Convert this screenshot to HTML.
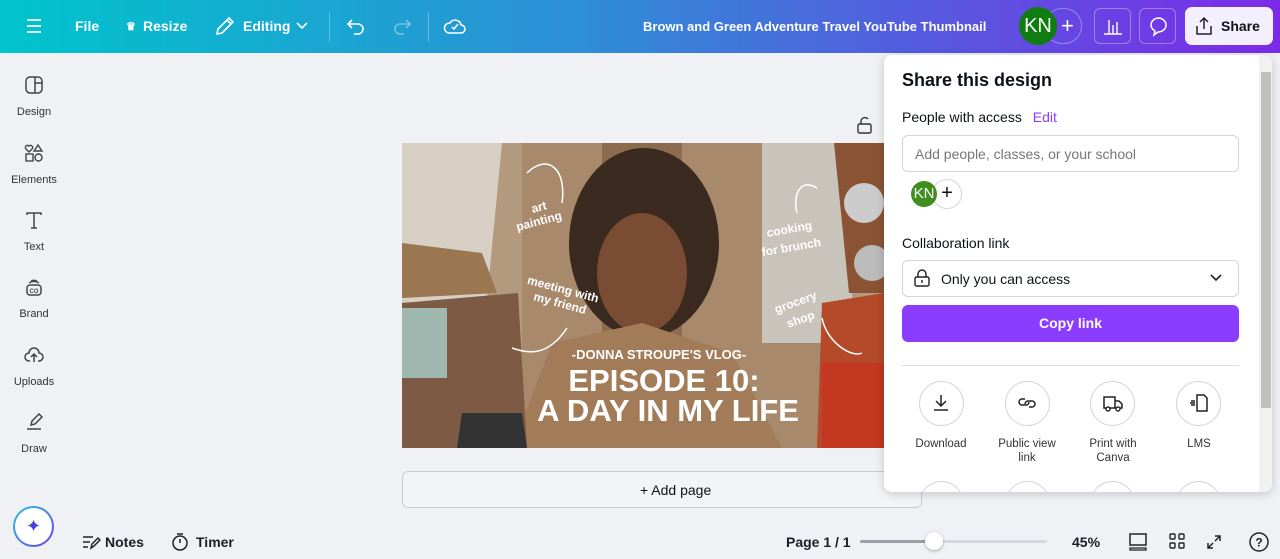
<!DOCTYPE html>
<html><head><meta charset="utf-8"><style>
*{box-sizing:border-box;margin:0;padding:0}
body{width:1280px;height:559px;overflow:hidden;background:#f0f1f5;font-family:"Liberation Sans",sans-serif;position:relative;color:#0d1216}
.top{position:absolute;left:0;top:0;width:1280px;height:53px;background:linear-gradient(90deg,#00c4cc 0%,#2d8fd6 45%,#5a55e0 75%,#7d2ae8 100%);color:#fff}
.top .t{position:absolute;font-weight:bold;font-size:14px;top:18px}
.side{position:absolute;left:0;top:53px;width:68px;height:506px}
.si{position:absolute;left:0;width:68px;text-align:center;font-size:11px;color:#333}
.si svg{display:block;margin:0 auto 11px}
.panel{position:absolute;left:884px;top:55px;width:388px;height:437px;background:#fff;border-radius:8px;box-shadow:0 2px 10px rgba(0,0,0,.18);overflow:hidden}
.bot{position:absolute;font-size:14px;font-weight:bold;color:#1b1f24}
.lab{position:absolute;top:382px;width:78px;text-align:center;font-size:11.5px;color:#333;line-height:14px}
</style></head><body>
<div class="top">
<svg style="position:absolute;left:26px;top:18px" width="16" height="16"><path d="M1 2h14M1 8h14M1 14h14" stroke="#fff" stroke-width="1.8"/></svg>
<span class="t" style="left:75px">File</span>
<span class="t" style="left:126px;font-size:11px;top:20px">♛</span><span class="t" style="left:143px">Resize</span>
<svg style="position:absolute;left:214px;top:15px" width="22" height="22"><path d="M3 19l1-5L15 3l4 4L8 18z M13 5l4 4" stroke="#fff" stroke-width="1.6" fill="none"/></svg>
<span class="t" style="left:243px">Editing</span>
<svg style="position:absolute;left:296px;top:21px" width="12" height="10"><path d="M1 2l5 5 5-5" stroke="#fff" stroke-width="1.6" fill="none"/></svg>
<div style="position:absolute;left:329px;top:12px;width:1px;height:30px;background:rgba(255,255,255,.3)"></div>
<svg style="position:absolute;left:346px;top:15px" width="22" height="22"><path d="M6 5L2 9l4 4M2 9h10a5 5 0 010 10H8" stroke="#fff" stroke-width="1.6" fill="none"/></svg>
<svg style="position:absolute;left:390px;top:15px" width="22" height="22"><path d="M16 5l4 4-4 4M20 9H10a5 5 0 000 10h4" stroke="rgba(255,255,255,.4)" stroke-width="1.6" fill="none"/></svg>
<div style="position:absolute;left:428px;top:12px;width:1px;height:30px;background:rgba(255,255,255,.3)"></div>
<svg style="position:absolute;left:443px;top:14px" width="24" height="24"><path d="M6 19h12a4 4 0 000-8 6 6 0 00-11-2 5 5 0 00-1 10z M9 13l2 2 4-5" stroke="#fff" stroke-width="1.5" fill="none"/></svg>
<span class="t" style="left:643px;font-size:13px;top:19px">Brown and Green Adventure Travel YouTube Thumbnail</span>
<div style="position:absolute;left:1044px;top:8px;width:38px;height:36px;border:1px solid rgba(255,255,255,.35);border-radius:18px"></div>
<span style="position:absolute;left:1061px;top:13px;font-size:22px">+</span>
<div style="position:absolute;left:1019px;top:7px;width:38px;height:38px;border-radius:50%;background:#0f7d0f;text-align:center;line-height:38px;font-size:20px">KN</div>
<div style="position:absolute;left:1094px;top:8px;width:37px;height:36px;border:1px solid rgba(255,255,255,.35);border-radius:6px"></div>
<svg style="position:absolute;left:1102px;top:16px" width="22" height="20"><path d="M2 18h18M7 4v14M11 9v9M15 6v12" stroke="#fff" stroke-width="1.4"/></svg>
<div style="position:absolute;left:1139px;top:8px;width:37px;height:36px;border:1px solid rgba(255,255,255,.35);border-radius:6px"></div>
<svg style="position:absolute;left:1147px;top:15px" width="22" height="22"><path d="M11 3a8 7 0 110 14l-4 3 1-4a8 7 0 013-13z" stroke="#fff" stroke-width="1.5" fill="none"/></svg>
<div style="position:absolute;left:1185px;top:7px;width:88px;height:38px;background:#f3effd;border-radius:7px;color:#0d1216">
<svg style="position:absolute;left:9px;top:9px" width="20" height="20"><path d="M10 13V2M6 6l4-4 4 4M3 10v8h14v-8" stroke="#222" stroke-width="1.5" fill="none"/></svg>
<span style="position:absolute;left:36px;top:11px;font-weight:bold;font-size:14px">Share</span></div>
</div>

<div class="side">
<div class="si" style="top:22px"><svg width="20" height="20"><rect x="2" y="2" width="16" height="16" rx="4" stroke="#444" stroke-width="1.5" fill="none"/><path d="M11 2v16M11 8h7" stroke="#444" stroke-width="1.5"/></svg>Design</div>
<div class="si" style="top:90px"><svg width="20" height="20"><path d="M5 9l-3-3a2 2 0 013-3 2 2 0 013 3z M14 2l4 6h-8z" stroke="#444" stroke-width="1.4" fill="none"/><rect x="2" y="11" width="7" height="7" stroke="#444" stroke-width="1.4" fill="none"/><circle cx="14.5" cy="14.5" r="3.5" stroke="#444" stroke-width="1.4" fill="none"/></svg>Elements</div>
<div class="si" style="top:157px"><svg width="20" height="20"><path d="M3 5V3h14v2M10 3v15M7 18h6" stroke="#444" stroke-width="1.5" fill="none"/></svg>Text</div>
<div class="si" style="top:224px"><svg width="20" height="20"><rect x="3" y="8" width="14" height="10" rx="3" stroke="#444" stroke-width="1.5" fill="none"/><path d="M5 6a7 5 0 0110 0M7 4a5 3 0 016 0" stroke="#444" stroke-width="1.3" fill="none"/><text x="10" y="16" font-size="6" text-anchor="middle" fill="#444" font-weight="bold">CO</text></svg>Brand</div>
<div class="si" style="top:292px"><svg width="20" height="20"><path d="M6 16H5a4 4 0 010-8 5 5 0 0110 0 4 4 0 010 8h-1M10 17v-7M7 12l3-3 3 3" stroke="#444" stroke-width="1.5" fill="none"/></svg>Uploads</div>
<div class="si" style="top:359px"><svg width="20" height="20"><path d="M7 13l1-4 7-7 3 3-7 7zM3 17h14" stroke="#444" stroke-width="1.5" fill="none"/></svg>Draw</div>
<div style="position:absolute;left:13px;top:453px;width:41px;height:41px;border-radius:50%;background:linear-gradient(135deg,#2bc4e0,#6a3ee8);padding:2px"><div style="width:37px;height:37px;border-radius:50%;background:#fff;text-align:center;line-height:37px;color:#4a3ee0;font-size:18px">✦</div></div>
</div>

<svg style="position:absolute;left:856px;top:116px" width="18" height="18"><rect x="2" y="8" width="13" height="9" rx="1.5" stroke="#333" stroke-width="1.4" fill="none"/><path d="M5 8V5a4 4 0 017-2" stroke="#333" stroke-width="1.4" fill="none"/></svg>

<svg style="position:absolute;left:402px;top:143px" width="482" height="305">
<rect width="482" height="305" fill="#b39a7f"/>
<rect x="120" y="0" width="320" height="305" fill="#a8896b"/>
<rect x="200" y="0" width="80" height="305" fill="#8d6b4f"/>
<ellipse cx="242" cy="100" rx="75" ry="95" fill="#3a2a1f"/>
<ellipse cx="240" cy="130" rx="45" ry="60" fill="#7a4c33"/>
<path d="M110 305L150 200 240 180 330 210 380 305z" fill="#a27c58"/>
<rect x="360" y="0" width="90" height="200" fill="#c9c4bb"/>
<polygon points="0,0 100,0 85,155 0,160" fill="#d8cfc4"/>
<polygon points="0,100 80,110 95,150 0,155" fill="#9a7651"/>
<polygon points="0,160 116,150 125,305 0,305" fill="#7d5a43"/>
<rect x="0" y="165" width="45" height="70" fill="#9fb9b0"/>
<polygon points="60,270 120,270 125,305 55,305" fill="#333"/>
<polygon points="432,0 482,0 482,150 447,150" fill="#8a5434"/>
<circle cx="462" cy="60" r="20" fill="#ccc"/><circle cx="470" cy="120" r="18" fill="#bbb"/>
<polygon points="420,160 482,150 482,305 415,305" fill="#b44a2a"/>
<rect x="420" y="220" width="62" height="85" fill="#c8321f" opacity=".8"/>
<g font-family="Liberation Sans" font-weight="bold" fill="#fff" text-anchor="middle">
<text x="257" y="216" font-size="13">-DONNA STROUPE'S VLOG-</text>
<text x="262" y="248" font-size="31">EPISODE 10:</text>
<text x="266" y="278" font-size="31">A DAY IN MY LIFE</text>
<g font-size="12"><text x="138" y="68" transform="rotate(-15 138 68)">art</text><text x="138" y="82" transform="rotate(-15 138 82)">painting</text>
<text x="388" y="90" transform="rotate(-10 388 90)">cooking</text><text x="390" y="108" transform="rotate(-10 390 108)">for brunch</text>
<text x="160" y="150" transform="rotate(15 160 150)">meeting with</text><text x="157" y="164" transform="rotate(15 157 164)">my friend</text>
<text x="395" y="163" transform="rotate(-20 395 163)">grocery</text><text x="400" y="180" transform="rotate(-20 400 180)">shop</text></g></g>
<path d="M125 30c20-20 40-5 35 30M165 185c-20 30-40 25-55 20M415 45c-15-10-25 5-20 25M420 175c5 25 30 40 40 35" stroke="#fff" stroke-width="1.5" fill="none"/>
</svg>

<div style="position:absolute;left:402px;top:471px;width:520px;height:37px;border:1px solid #c9ccd3;border-radius:6px;background:#f3f4f7"></div>
<span style="position:absolute;left:640px;top:482px;font-size:14px">+ Add page</span>

<div class="panel">
<div style="position:absolute;left:18px;top:15px;font-size:18px;font-weight:bold">Share this design</div>
<div style="position:absolute;left:18px;top:54px;font-size:14px">People with access <span style="color:#8b3dff;margin-left:7px">Edit</span></div>
<div style="position:absolute;left:18px;top:80px;width:337px;height:37px;border:1px solid #d3d5da;border-radius:6px;font-size:14px;color:#777;padding:10px 12px">Add people, classes, or your school</div>
<div style="position:absolute;left:48px;top:124px;width:30px;height:30px;border:1px solid #d3d5da;border-radius:50%;text-align:center;line-height:27px;font-size:20px">+</div>
<div style="position:absolute;left:27px;top:126px;width:26px;height:26px;border-radius:50%;background:#3f8e1e;color:#fff;text-align:center;line-height:26px;font-size:15px">KN</div>
<div style="position:absolute;left:18px;top:180px;font-size:14px">Collaboration link</div>
<div style="position:absolute;left:18px;top:205px;width:337px;height:37px;border:1px solid #d3d5da;border-radius:6px;font-size:14px;padding:10px 38px">Only you can access</div>
<svg style="position:absolute;left:29px;top:214px" width="18" height="18"><rect x="2" y="8" width="14" height="9" rx="1.5" stroke="#222" stroke-width="1.4" fill="none"/><path d="M5 8V5a4 4 0 018 0v3M9 11v3" stroke="#222" stroke-width="1.4" fill="none"/></svg>
<svg style="position:absolute;left:325px;top:218px" width="14" height="10"><path d="M2 2l5 5 5-5" stroke="#222" stroke-width="1.6" fill="none"/></svg>
<div style="position:absolute;left:18px;top:250px;width:337px;height:37px;background:#8b3dff;border-radius:6px;color:#fff;font-weight:bold;font-size:14px;text-align:center;line-height:37px">Copy link</div>
<div style="position:absolute;left:18px;top:310px;width:337px;height:1px;background:#dcdee2"></div>
<div style="position:absolute;left:35px;top:326px;width:45px;height:45px;border:1px solid #d3d5da;border-radius:50%"></div>
<div style="position:absolute;left:121px;top:326px;width:45px;height:45px;border:1px solid #d3d5da;border-radius:50%"></div>
<div style="position:absolute;left:206px;top:326px;width:45px;height:45px;border:1px solid #d3d5da;border-radius:50%"></div>
<div style="position:absolute;left:292px;top:326px;width:45px;height:45px;border:1px solid #d3d5da;border-radius:50%"></div>
<svg style="position:absolute;left:47px;top:338px" width="20" height="20"><path d="M10 2v11M5 8l5 5 5-5M3 17h14" stroke="#222" stroke-width="1.5" fill="none"/></svg>
<svg style="position:absolute;left:133px;top:338px" width="20" height="20"><path d="M8 6H5a3 3 0 000 6h4a3 3 0 003-3M12 14h3a3 3 0 000-6h-4a3 3 0 00-3 3" stroke="#222" stroke-width="1.5" fill="none"/></svg>
<svg style="position:absolute;left:218px;top:338px" width="22" height="20"><path d="M2 4h11v11H2zM13 8h4l3 3v4h-7" stroke="#222" stroke-width="1.5" fill="none"/><circle cx="6" cy="16" r="2" fill="#fff" stroke="#222" stroke-width="1.4"/><circle cx="16" cy="16" r="2" fill="#fff" stroke="#222" stroke-width="1.4"/></svg>
<svg style="position:absolute;left:304px;top:338px" width="22" height="20"><path d="M9 2h7l3 3v13H9zM3 8h4M2 10h5M3 12h4" stroke="#222" stroke-width="1.5" fill="none"/></svg>
<div class="lab" style="left:18px">Download</div>
<div class="lab" style="left:110px;width:66px">Public view link</div>
<div class="lab" style="left:190px">Print with Canva</div>
<div class="lab" style="left:276px">LMS</div>
<div style="position:absolute;left:35px;top:426px;width:45px;height:45px;border:1px solid #d3d5da;border-radius:50%"></div>
<div style="position:absolute;left:121px;top:426px;width:45px;height:45px;border:1px solid #d3d5da;border-radius:50%"></div>
<div style="position:absolute;left:206px;top:426px;width:45px;height:45px;border:1px solid #d3d5da;border-radius:50%"></div>
<div style="position:absolute;left:292px;top:426px;width:45px;height:45px;border:1px solid #d3d5da;border-radius:50%"></div>
<div style="position:absolute;left:375px;top:0;width:13px;height:437px;background:#f1f1f1"></div>
<div style="position:absolute;left:377px;top:17px;width:10px;height:336px;background:#c1c1c1"></div>
</div>

<svg style="position:absolute;left:81px;top:533px" width="20" height="18"><path d="M2 4h10M2 9h7M2 14h5M10 15l1-4 6-6 2 2-6 6z" stroke="#222" stroke-width="1.5" fill="none"/></svg>
<span class="bot" style="left:105px;top:534px">Notes</span>
<svg style="position:absolute;left:171px;top:533px" width="18" height="18"><circle cx="9" cy="10" r="7" stroke="#222" stroke-width="1.5" fill="none"/><path d="M9 6v4M6 1h6" stroke="#222" stroke-width="1.5"/></svg>
<span class="bot" style="left:196px;top:534px">Timer</span>
<span class="bot" style="left:786px;top:534px">Page 1 / 1</span>
<div style="position:absolute;left:860px;top:540px;width:187px;height:3px;background:#d6d8de;border-radius:2px"></div>
<div style="position:absolute;left:860px;top:540px;width:74px;height:3px;background:#9a9fa8;border-radius:2px"></div>
<div style="position:absolute;left:925px;top:532px;width:18px;height:18px;border-radius:50%;background:#fff;box-shadow:0 1px 3px rgba(0,0,0,.3)"></div>
<span class="bot" style="left:1072px;top:534px">45%</span>
<svg style="position:absolute;left:1128px;top:532px" width="20" height="20"><rect x="2" y="2" width="16" height="11" stroke="#222" stroke-width="1.5" fill="none"/><path d="M2 16h16v2H2z" stroke="#222" stroke-width="1.3" fill="none"/></svg>
<svg style="position:absolute;left:1168px;top:532px" width="18" height="18"><rect x="2" y="2" width="5" height="5" rx="1" stroke="#222" stroke-width="1.4" fill="none"/><rect x="11" y="2" width="5" height="5" rx="1" stroke="#222" stroke-width="1.4" fill="none"/><rect x="2" y="11" width="5" height="5" rx="1" stroke="#222" stroke-width="1.4" fill="none"/><rect x="11" y="11" width="5" height="5" rx="1" stroke="#222" stroke-width="1.4" fill="none"/></svg>
<svg style="position:absolute;left:1205px;top:533px" width="18" height="18"><path d="M3 15l5-5M3 10v5h5M15 3l-5 5M10 3h5v5" stroke="#222" stroke-width="1.5" fill="none"/></svg>
<svg style="position:absolute;left:1248px;top:531px" width="22" height="22"><circle cx="11" cy="11" r="9" stroke="#222" stroke-width="1.5" fill="none"/><text x="11" y="15.5" font-size="12" text-anchor="middle" font-family="Liberation Sans" font-weight="bold" fill="#222">?</text></svg>
</body></html>
